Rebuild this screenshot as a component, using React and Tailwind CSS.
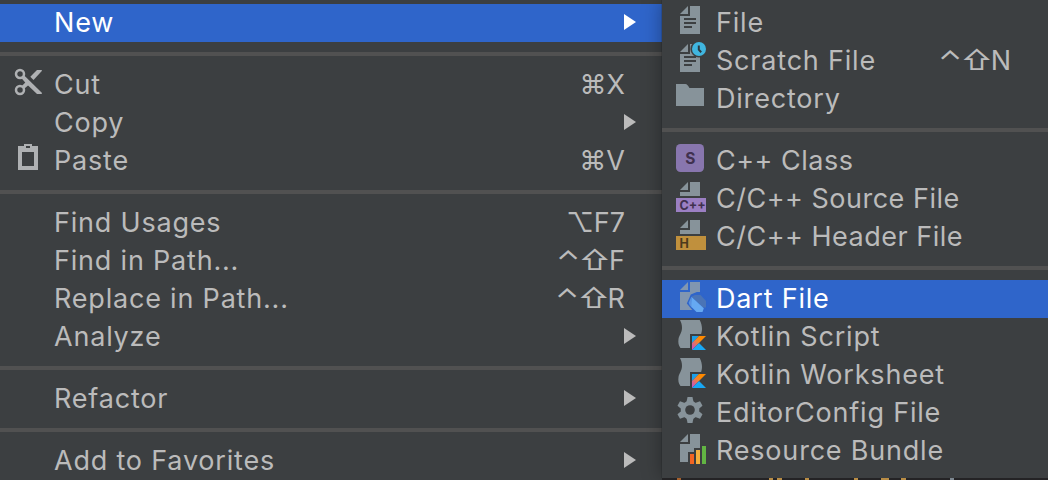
const DOC = '#87939a'
const PANEL = '#3c3f41'

function Icon({ children }) {
  return (
    <svg width="34" height="38" viewBox="0 0 34 38" className="block">
      {children}
    </svg>
  )
}

function Sheet({ fill = DOC }) {
  return (
    <>
      <path d="M14 2v8H6z" fill={fill} />
      <path d="M16 2h10v28H6V12h10z" fill={fill} />
    </>
  )
}

function SheetLines() {
  return <path d="M10 14h12v2H10zM10 18h12v2H10zM10 22h8v2h-8z" fill={PANEL} />
}

function FileIcon() {
  return (
    <Icon>
      <Sheet />
      <SheetLines />
    </Icon>
  )
}

function ScratchIcon() {
  return (
    <Icon>
      <Sheet />
      <SheetLines />
      <circle cx="25" cy="7" r="8.6" fill={PANEL} />
      <circle cx="25" cy="7" r="7" fill="#40b6e0" />
      <path d="M24.8 3.5v4.2l2.4 2.6" fill="none" stroke="#2b3a42" strokeWidth="2" />
    </Icon>
  )
}

function FolderIcon() {
  return (
    <Icon>
      <path d="M2 4h9.5c1.5 0 2 1 4 4H30v18H2z" fill={DOC} />
    </Icon>
  )
}

function ClassIcon() {
  return (
    <Icon>
      <rect x="2" y="2" width="28" height="28" rx="4.5" fill="#8876ae" />
      <text x="16.3" y="21.6" textAnchor="middle" fontSize="15.5" fontWeight="700" fill="#40314f">
        S
      </text>
    </Icon>
  )
}

function TaggedFileIcon({ label, color, ink }) {
  return (
    <Icon>
      <path d="M14 2v8H6z" fill={DOC} />
      <path d="M16 2h10v14H6v-4h10z" fill={DOC} />
      <rect x="2" y="18" width="30" height="14" fill={color} />
      <text x="5.5" y="29.6" fontSize="12.5" fontWeight="700" fill={ink}>
        {label}
      </text>
    </Icon>
  )
}

function DartIcon() {
  return (
    <Icon>
      <Sheet fill="#8196b0" />
      <path d="M12.8 23.5l4-9 6-2.5h4l6 6v14H20z" fill="#2f65ca" />
      <path d="M17.5 16.8l3.5-1.8h5.5l5.5 6v6.5h-3z" fill="#4a74b6" />
      <path d="M17.2 17L14.8 22.6c0 1.4.6 2.4 1.6 3.4l2 2z" fill="#5a93e0" />
      <path d="M17.4 16.8L29.8 28.2 28.5 32h-6l-5-5z" fill="#66a9f2" />
    </Icon>
  )
}

function KotlinIcon({ id }) {
  return (
    <Icon>
      <defs>
        <linearGradient id={id} x1="18" y1="32" x2="32" y2="18" gradientUnits="userSpaceOnUse">
          <stop offset="0.1" stopColor="#c757bc" />
          <stop offset="0.25" stopColor="#d7668a" />
          <stop offset="0.5" stopColor="#f48430" />
          <stop offset="0.7" stopColor="#ff8900" />
        </linearGradient>
      </defs>
      <path
        d="M6 2h19.7c1.6 3 2.3 6 2.3 9 0 3-1 5-1.6 7.5C25.5 22 25 26 26 30H6.5C4.5 27.5 4 24.5 4.5 21 5 17.5 8 14.5 8 10 8 7 7.3 4.5 6 2z"
        fill={DOC}
      />
      <path d="M16 16h18v18H16z" fill={PANEL} />
      <path d="M18 18h7l-7 7.3z" fill="#1c9fe8" />
      <path d="M25 18h7L18 32v-7z" fill={`url(#${id})`} />
      <path d="M18 32l7-7 7 7z" fill="#18a8f5" />
    </Icon>
  )
}

function GearIcon() {
  return (
    <Icon>
      <g fill={DOC}>
        {[0, 60, 120].map(angle => (
          <path key={angle} d="M13.5 3h5l1 5v16l-1 5h-5l-1-5V8z" transform={`rotate(${angle} 16 16)`} />
        ))}
        <circle cx="16" cy="16" r="9.3" />
      </g>
      <circle cx="16" cy="16" r="4.8" fill={PANEL} />
    </Icon>
  )
}

function BundleIcon() {
  return (
    <Icon>
      <Sheet />
      <path d="M14 20h6v-4h6v-4h8v22H14z" fill={PANEL} />
      <path d="M16 22h4v10h-4z" fill="#f26522" />
      <path d="M22 18h4v14h-4z" fill="#f4af3d" />
      <path d="M28 14h4v18h-4z" fill="#62b543" />
    </Icon>
  )
}

function CutIcon() {
  return (
    <Icon>
      <g fill="none" stroke="#afb1b3" strokeWidth="2.5">
        <circle cx="8" cy="8" r="4" />
        <circle cx="8" cy="24" r="4" />
      </g>
      <path d="M9.8 12.5l2.7-2.7L29.8 26.8V28H25L14 17.5z" fill="#afb1b3" />
      <path d="M25 4h4.8v1L21.5 14l-3.2-3.2z" fill="#afb1b3" />
      <path d="M9.8 20l5-5 3 3-5.3 4.5z" fill="#afb1b3" />
    </Icon>
  )
}

function PasteIcon() {
  return (
    <Icon>
      <path
        fillRule="evenodd"
        d="M12 2h8v2h6v24H6V4h6zM14 4v2h4V4zM10 10v14h12V10z"
        fill="#afb1b3"
      />
    </Icon>
  )
}

function Arrow() {
  return (
    <svg width="12" height="16" viewBox="0 0 12 16" className="mr-[26px] -mt-0.5">
      <path d="M0 0l12 8-12 8z" fill="currentColor" />
    </svg>
  )
}

// the caret and shift glyphs are drawn wider than the letter after them
function Shortcut({ mods, keys }) {
  return (
    <span className="mr-[37px] text-[27px] leading-[38px]">
      {mods && (
        <span className="inline-block origin-right scale-x-115 tracking-[-1.5px]">{mods}</span>
      )}
      <span>{keys}</span>
    </span>
  )
}

const mainMenu = [
  [{ label: 'New', submenu: true, active: true }],
  [
    { label: 'Cut', icon: <CutIcon />, keys: '⌘X' },
    { label: 'Copy', submenu: true },
    { label: 'Paste', icon: <PasteIcon />, keys: '⌘V' },
  ],
  [
    { label: 'Find Usages', keys: '⌥F7' },
    { label: 'Find in Path...', mods: '⌃⇧', keys: 'F' },
    { label: 'Replace in Path...', mods: '⌃⇧', keys: 'R' },
    { label: 'Analyze', submenu: true },
  ],
  [{ label: 'Refactor', submenu: true }],
  [{ label: 'Add to Favorites', submenu: true }],
]

const newMenu = [
  [
    { label: 'File', icon: <FileIcon /> },
    { label: 'Scratch File', icon: <ScratchIcon />, mods: '⌃⇧', keys: 'N' },
    { label: 'Directory', icon: <FolderIcon /> },
  ],
  [
    { label: 'C++ Class', icon: <ClassIcon />, tight: true },
    {
      label: 'C/C++ Source File',
      icon: <TaggedFileIcon label="C++" color="#9b7fc3" ink="#40314f" />,
      tight: true,
    },
    {
      label: 'C/C++ Header File',
      icon: <TaggedFileIcon label="H" color="#c0903d" ink="#4d3a1c" />,
      tight: true,
    },
  ],
  [
    { label: 'Dart File', icon: <DartIcon />, active: true },
    { label: 'Kotlin Script', icon: <KotlinIcon id="kotlin-script" /> },
    { label: 'Kotlin Worksheet', icon: <KotlinIcon id="kotlin-worksheet" /> },
    { label: 'EditorConfig File', icon: <GearIcon /> },
    { label: 'Resource Bundle', icon: <BundleIcon /> },
  ],
]

function MenuItem({ item }) {
  return (
    <div
      className={`flex h-[38px] items-center whitespace-nowrap ${
        item.active ? 'bg-[#2f65ca] text-white' : 'text-[#bbbbbb]'
      }`}
    >
      <div className="ml-3 w-[42px] shrink-0">{item.icon}</div>
      <span
        className={`flex-1 text-[27px] leading-[38px] ${
          item.tight ? 'tracking-[0.5px]' : 'tracking-[0.8px]'
        }`}
      >
        {item.label}
      </span>
      {item.keys && <Shortcut mods={item.mods} keys={item.keys} />}
      {item.submenu && <Arrow />}
    </div>
  )
}

function Menu({ groups }) {
  return groups.map((group, i) => (
    <div key={group[0].label}>
      {i > 0 && <div className="my-2.5 h-1 bg-[#515151]" />}
      {group.map(item => (
        <MenuItem key={item.label} item={item} />
      ))}
    </div>
  ))
}

// slivers of the editor text showing under the submenu
const codeBits = [
  'ml-[15px] w-[4px] bg-[#a5602c]',
  'ml-[88px] w-[4px] bg-[#b98d45]',
  'ml-[4px] w-[5px] bg-[#b98d45]',
  'ml-[23px] w-[4px] bg-[#b98d45]',
  'ml-[45px] w-[4px] bg-[#b98d45]',
  'ml-[23px] w-[8px] bg-[#b98d45]',
  'ml-[12px] w-[5px] bg-[#b98d45]',
  'ml-[44px] w-[4px] bg-[#7d8790]',
]

export default function App() {
  return (
    <div className="flex h-[480px] w-[1048px] overflow-hidden bg-[#242325] font-['Inter',sans-serif]">
      <div className="h-[480px] w-[662px] shrink-0 bg-[#3c3f41] pt-1">
        <Menu groups={mainMenu} />
      </div>
      <div className="relative w-[386px]">
        <div className="h-[478px] bg-[#3c3f41] pt-1 shadow-[0_0_18px_rgba(0,0,0,0.35),0_0_1px_#222]">
          <Menu groups={newMenu} />
        </div>
        <div className="flex h-0.5 bg-[#242325]">
          {codeBits.map((bit, i) => (
            <span key={i} className={`h-0.5 ${bit}`} />
          ))}
        </div>
      </div>
    </div>
  )
}
